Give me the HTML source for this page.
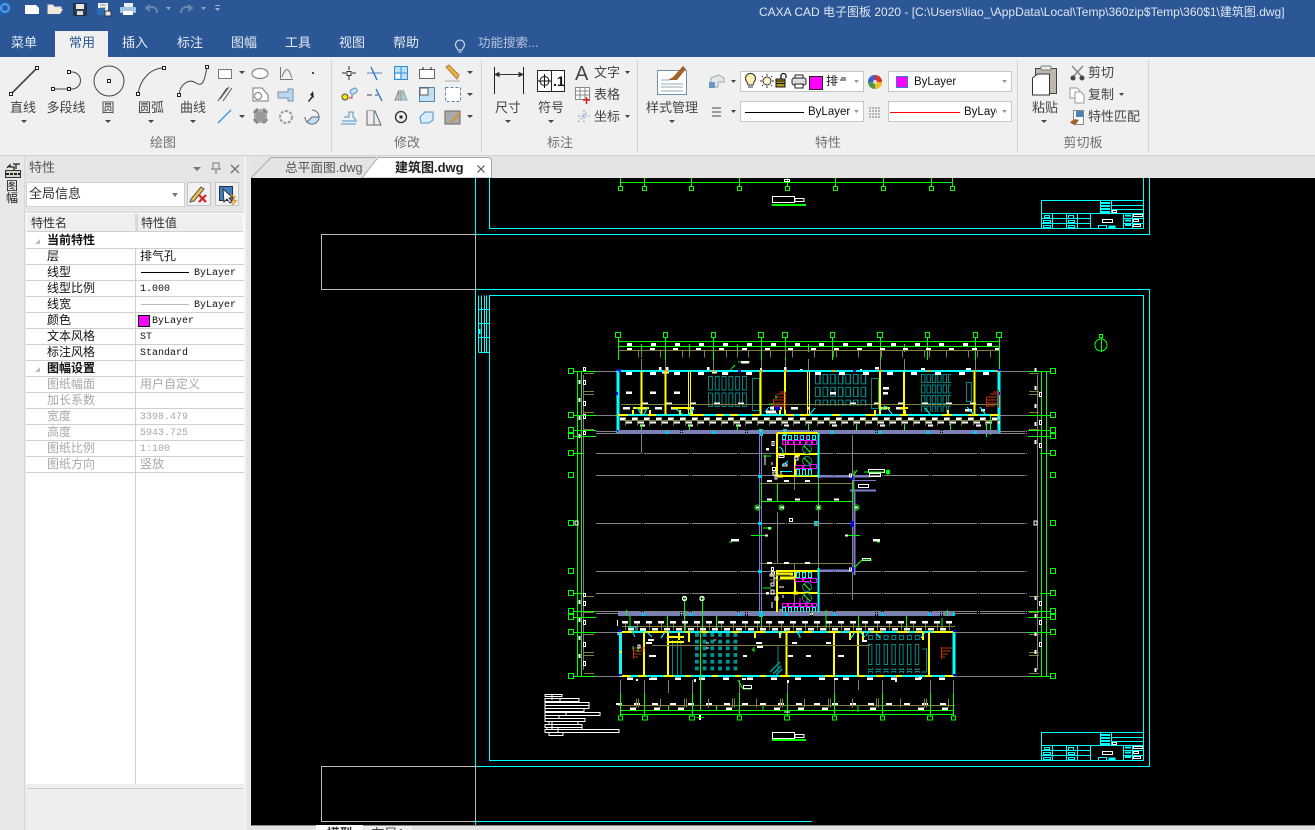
<!DOCTYPE html>
<html lang="zh"><head><meta charset="utf-8"><title>CAXA CAD</title>
<style>
html,body{margin:0;padding:0;width:1315px;height:830px;overflow:hidden;background:#f0f0f0}
body{position:relative;font-family:"Liberation Sans","Noto Sans CJK SC",sans-serif;font-size:13px;color:#444}
.a{position:absolute}
.t{position:absolute;white-space:nowrap;line-height:18px;height:18px}
.c{transform:translateX(-50%)}
.g{color:#707070}
.tab{color:#e6ebf4;font-size:13px}
.combo{position:absolute;background:#fff;border:1px solid #c6c6c6;box-sizing:border-box;height:21px;overflow:hidden}
.combo span{font-size:11.5px}
.r{position:absolute;left:26px;width:218px;height:16px;box-sizing:border-box;border-bottom:1px solid #cfcfcf;font:12px/15px "WenQuanYi Zen Hei","Noto Sans CJK SC",sans-serif;color:#111;overflow:hidden}
.r b{position:absolute;left:21px;top:-1px;font-weight:normal;white-space:nowrap}
.r i{position:absolute;left:114px;top:-1px;font-style:normal;white-space:nowrap}
.r i.m{font:10px/17px "Liberation Mono",monospace;top:0}
.r.d{color:#a8a8a8}
.r.h b{font-weight:bold}
.r s{position:absolute;left:9px;top:6px;width:0;height:0;border-left:5px solid transparent;border-bottom:5px solid #bbb}
svg{position:absolute;display:block}
</style></head><body>

<div class="a" style="left:0;top:0;width:1315px;height:57px;background:#2b5797"></div>
<div class="a" style="left:55px;top:31px;width:53px;height:26px;background:#f0f0f0"></div>
<div class="t tab c" style="left:24px;top:34px">菜单</div>
<div class="t c" style="left:82px;top:34px;color:#2b5797">常用</div>
<div class="t tab c" style="left:135px;top:34px">插入</div>
<div class="t tab c" style="left:190px;top:34px">标注</div>
<div class="t tab c" style="left:244px;top:34px">图幅</div>
<div class="t tab c" style="left:298px;top:34px">工具</div>
<div class="t tab c" style="left:352px;top:34px">视图</div>
<div class="t tab c" style="left:406px;top:34px">帮助</div>
<div class="t" style="left:478px;top:34px;font-size:12.500px;color:#b9c6dc">功能搜索...</div>
<div class="t" style="left:759px;top:3px;font-size:12px;color:#dfe6f1">CAXA CAD 电子图板 2020 - [C:\Users\liao_\AppData\Local\Temp\360zip$Temp\360$1\建筑图.dwg]</div>

<!-- ribbon -->
<div class="a" style="left:0;top:155px;width:1315px;height:23px;background:#e4e4e4;border-top:1px solid #d4d4d4;box-sizing:border-box"></div>

<div class="t c" style="left:23px;top:99px">直线</div>
<div class="t c" style="left:66px;top:99px">多段线</div>
<div class="t c" style="left:108px;top:99px">圆</div>
<div class="t c" style="left:151px;top:99px">圆弧</div>
<div class="t c" style="left:193px;top:99px">曲线</div>
<div class="t c g" style="left:163px;top:134px">绘图</div>
<div class="t c g" style="left:407px;top:134px">修改</div>
<div class="t c g" style="left:560px;top:134px">标注</div>
<div class="t c g" style="left:828px;top:134px">特性</div>
<div class="t c g" style="left:1083px;top:134px">剪切板</div>
<div class="t c" style="left:508px;top:99px">尺寸</div>
<div class="t c" style="left:551px;top:99px">符号</div>
<div class="t" style="left:594px;top:64px">文字</div>
<div class="t" style="left:594px;top:86px">表格</div>
<div class="t" style="left:594px;top:108px">坐标</div>
<div class="t c" style="left:672px;top:99px">样式管理</div>
<div class="t c" style="left:1045px;top:99px">粘贴</div>
<div class="t" style="left:1088px;top:64px">剪切</div>
<div class="t" style="left:1088px;top:86px">复制</div>
<div class="t" style="left:1088px;top:108px">特性匹配</div>

<div class="combo" style="left:740px;top:71px;width:124px"><span class="a" style="left:85px;top:0;font-size:12px;line-height:18px;color:#111;width:13px;overflow:hidden;white-space:nowrap">排气</span></div>
<div class="combo" style="left:888px;top:71px;width:124px"><span class="a" style="left:25px;top:1px;line-height:18px;color:#111">ByLayer</span></div>
<div class="combo" style="left:740px;top:101px;width:124px"><span class="a" style="left:67px;top:1px;line-height:18px;color:#111">ByLayer</span></div>
<div class="combo" style="left:888px;top:101px;width:124px"><span class="a" style="left:75px;top:1px;line-height:18px;color:#111;width:33px;overflow:hidden">ByLayer</span></div>

<svg style="left:0;top:0" width="1315" height="178" viewBox="0 0 1315 178">
 <!-- quick access -->
 <circle cx="4" cy="8" r="7" fill="#1f5fb8"/><circle cx="5" cy="8" r="4" fill="none" stroke="#4aa0e8" stroke-width="2"/><circle cx="5" cy="8" r="1.500" fill="#2b5797"/>
 <path d="M25 5h11l3 3v6H25z" fill="#fff"/>
 <path d="M48 14V5h5l1 2h7v2" fill="#f3efe2" stroke="#ddd"/><path d="M48 14l3-5h12l-3 5z" fill="#efe9d2"/>
 <rect x="73.500" y="3.500" width="13" height="12" rx="1" fill="#263a54" stroke="#1d2a3c"/><rect x="76" y="4" width="8" height="5" fill="#e8e8e8"/><rect x="77" y="11" width="6" height="4" fill="#ddd"/>
 <path d="M98 3h10v9H98z" fill="#f3f3f3"/><path d="M100 5h6M100 8h6" stroke="#889"/><rect x="97" y="8" width="8" height="7" fill="#2f6db5"/><rect x="105" y="11" width="6" height="5" fill="#e8e8e8" stroke="#333"/>
 <rect x="124" y="3" width="9" height="4" fill="#eee"/><rect x="120" y="7" width="16" height="6" rx="1" fill="#9fc5de"/><rect x="123" y="11" width="10" height="4" fill="#fff"/>
 <path d="M157 13c0-6-5-7-9-5M150 5l-4 3 4 3" fill="none" stroke="#6a86b3" stroke-width="2"/>
 <path d="M181 13c0-6 5-7 9-5M188 5l4 3-4 3" fill="none" stroke="#6a86b3" stroke-width="2"/>
 <path d="M166 7h5l-2.500 3zM201 7h5l-2.500 3z" fill="#8fa6c8"/>
 <path d="M215 5h5v1h-5zM215 8h5l-2.500 3z" fill="#9fb2cf"/>
 <!-- search bulb -->
 <path d="M457 48a4.500 4.500 0 1 1 6 0l-1 2h-4zM458.500 52h3" fill="none" stroke="#c7d2e4" stroke-width="1.200"/>

 <!-- separators -->
 <path d="M331.500 60V152M481.500 60V152M637.500 60V152M1017.500 60V152M1148.500 60V152" stroke="#d3d3d3"/>

 <!-- large draw icons -->
 <g fill="none" stroke="#444">
  <path d="M11 94L37 68" stroke-width="1.600"/>
  <path d="M53 89H69M69 72h3a8.500 8.500 0 0 1 0 17h-3"/>
  <circle cx="109" cy="81" r="15"/>
  <path d="M138 94C140 80 150 68 164 68"/>
  <path d="M179 95C180 84 189 78 196 83C204 88 205 77 207 67"/>
 </g>
 <g fill="#fff" stroke="#222"><rect x="9.500" y="92.500" width="3" height="3"/><rect x="35.500" y="66.500" width="3" height="3"/>
  <rect x="51.500" y="87.500" width="3" height="3"/><rect x="67.500" y="87.500" width="3" height="3"/><rect x="67.500" y="70.500" width="3" height="3"/>
  <rect x="107.500" y="79.500" width="3" height="3"/><rect x="136.500" y="92.500" width="3" height="3"/><rect x="162.500" y="66.500" width="3" height="3"/>
  <rect x="177.500" y="93.500" width="3" height="3"/><rect x="205.500" y="65.500" width="3" height="3"/></g>
 <g fill="#444"><path d="M21 120h6l-3 3zM105 120h6l-3 3zM148 120h6l-3 3zM190 120h6l-3 3zM239 71h6l-3 3zM239 115h6l-3 3zM467 71h6l-3 3zM467 93h6l-3 3zM467 115h6l-3 3zM505 120h6l-3 3zM548 120h6l-3 3zM625 71h5l-2.500 3zM625 115h5l-2.500 3zM669 120h6l-3 3zM731 80h5l-2.500 3zM731 110h5l-2.500 3zM1041 120h6l-3 3zM1119 93h5l-2.500 3z"/></g>
 <!-- small draw icons -->
 <g fill="none" stroke="#777">
  <rect x="218.500" y="69.500" width="13" height="9" fill="#fff"/>
  <ellipse cx="260" cy="73.500" rx="8" ry="5" fill="#fff"/>
  <path d="M280.500 67V79.500H293M282 77c3-9 6-9 8-4l2 5"/>
  <path d="M223 101l9-13M220 99l9-12M218 101l9-13" stroke="#555"/>
  <path d="M253 88h9l6 7v6h-15z" fill="#fff"/><circle cx="258" cy="96" r="3.500"/>
  <path d="M255 110h11v12h-11zM253 112h15M253 120h15M257 108v16M264 108v16" stroke="#666"/>
  <path d="M305 117a7 7 0 1 0 7-7" stroke="#666"/>
 </g>
 <path d="M312 72h2v2h-2z" fill="#444"/>
 <path d="M218 123L231 110" stroke="#2f9ae0" stroke-width="1.300" fill="none"/>
 <path d="M278 92h10v-3h5v12h-5v-3h-10z" fill="#bcd8ee" stroke="#7a8fa3"/>
 <path d="M313 91l-3 4 2 1-4 5 1 1 4-5 1 2z" fill="#222"/>
 <path d="M256 112h9v9h-9z" fill="#999"/>
 <circle cx="286" cy="117" r="6" fill="#f4f4f4" stroke="#999" stroke-dasharray="3 1.500" stroke-width="2"/>
 <path d="M312 117h7a7 7 0 0 1-12 5z" fill="#bfe0f5" stroke="#667"/>
 <!-- modify icons -->
 <g fill="none" stroke="#2b2b2b">
  <path d="M342 73h4M352 73h4M349 66v4M349 76v4"/><rect x="347" y="71.500" width="4" height="4" fill="#fff"/>
  <path d="M367 73h15" stroke="#5e88b3"/><path d="M371 67l6 13" stroke="#1f73c4" stroke-width="1.300"/>
  <path d="M367 95h5M375 95h3" stroke="#444"/><path d="M376 89l6 12" stroke="#1f73c4" stroke-width="1.300"/>
  <path d="M401 90v11" stroke="#666"/><path d="M399 90l-4 10h4z" fill="#c8ccd0" stroke="#888"/><path d="M403 90l4 10h-4z" fill="#b9dcf2" stroke="#7aa"/>
  <circle cx="401" cy="117" r="5.500" stroke-width="1.300"/><path d="M400 116h2v2h-2z" fill="#222"/>
 </g>
 <g stroke="#2f8fd6" fill="#bfe0f5"><rect x="394.500" y="66.500" width="13" height="13"/><path d="M401 66v13M394 73h13" fill="none"/><rect x="396" y="74" width="4" height="4" fill="#fff" stroke="none"/></g>
 <g fill="none" stroke="#666"><rect x="419.500" y="69.500" width="15" height="9" fill="#fff"/><path d="M423 67v3M431 67v3" stroke="#2b2b2b"/>
  <rect x="445.500" y="87.500" width="15" height="14" fill="#fff" stroke-dasharray="3 2" stroke="#58a"/>
  <path d="M367 111h8l6 14h-14z" fill="#e5f0f8"/><path d="M367 111v14h7V111" fill="#eee"/>
  <path d="M445 111h15v13h-15z" fill="#aaa"/></g>
 <path d="M419.500 87.500h15v14h-15z" fill="#bfe0f5" stroke="#58a"/><path d="M420 88h8v7h-8z" fill="#fff" stroke="#555"/>
 <path d="M446 67l3-2 10 10-2 4z" fill="#f2b330" stroke="#a75"/><path d="M445 81h15" stroke="#aaa"/>
 <circle cx="345" cy="97" r="3" fill="#ffe600" stroke="#444"/><rect x="350" y="89" width="7" height="5" rx="2" fill="#bfe0f5" stroke="#5a8fc0" transform="rotate(-30 353 91)"/><path d="M349 98h3v-3" fill="none" stroke="#b33"/>
 <path d="M342 121h15M344 117h5v-5h4v5l3 3M341 124h15" fill="none" stroke="#4b93cb"/>
 <path d="M420 117l5-5h8v8l-4 3h-8z" fill="#d8edf9" stroke="#4b93cb"/>
 <path d="M452 122l8-9" stroke="#d99020" stroke-width="2"/>
 <!-- annotate -->
 <path d="M494.500 67V94M523.500 67V94" stroke="#222"/><path d="M495 74.500H523M495 74.500l4-2v4zM523 74.500l-4-2v4z" stroke="#333" fill="#333"/>
 <rect x="537.500" y="70.500" width="27" height="21" fill="#fff" stroke="#222"/><path d="M551.500 70v21" stroke="#222"/><circle cx="544.500" cy="81" r="4.500" fill="none" stroke="#111"/><path d="M538 81h13M544.500 74v14" stroke="#111"/>
 <text x="553" y="86" font-family="Liberation Sans" font-weight="bold" font-size="14" fill="#111">.1</text>
 <text x="575" y="80" font-family="Liberation Sans" font-size="20" fill="#444">A</text>
 <g fill="#fff" stroke="#888"><rect x="575.500" y="87.500" width="14" height="12"/><path d="M575 91h15M575 95h15M580 87v13M585 87v13" fill="none"/></g><path d="M583 100h7M586.500 97v7" stroke="#d22" stroke-width="1.500"/>
 <path d="M578 116h12M584 110v14M578 122l9-10" stroke="#7fa3c4" stroke-dasharray="2 1.500" fill="none"/>
 <!-- style mgmt -->
 <rect x="657.500" y="70.500" width="29" height="24" fill="#fff" stroke="#6f8fab"/><path d="M661 80h9M661 84h22M661 87h22M661 91h22" stroke="#96a9ba"/><path d="M668 80l5-3 10-11 3 3-9 11z" fill="#a0642a"/>
 <!-- props -->
 <path d="M711 78l8-3 5 3v4h-6v5h-7z" fill="#e3e8ef" stroke="#9aa"/><rect x="709" y="82" width="6" height="6" fill="#6f93c4"/>
 <path d="M747 82a5 5 0 1 1 7 0l-1 3h-5zM748 87h5" fill="#fbeeb0" stroke="#333"/>
 <circle cx="767" cy="81" r="4" fill="#fdf3d0" stroke="#333"/><path d="M767 74v2M767 86v2M760 81h2M772 81h2M762 76l1 1M772 76l-1 1M762 86l1-1M772 86l-1-1" stroke="#333"/>
 <rect x="776" y="79" width="9" height="8" fill="#b39b1a" stroke="#111"/><path d="M776 81h9M776 83.500h9" stroke="#111"/><path d="M781 79v-3a2.500 2.500 0 0 1 5 0v2" fill="none" stroke="#111" stroke-width="1.300"/>
 <rect x="792" y="78" width="14" height="7" rx="2" fill="#ddd" stroke="#222"/><rect x="795" y="75" width="8" height="3" fill="#fff" stroke="#222"/><rect x="795" y="84" width="8" height="4" fill="#fff" stroke="#222"/>
 <rect x="809.500" y="76.500" width="13" height="13" fill="#f0f" stroke="#222"/>
 <path d="M841 78h5M840 80h6" stroke="#222"/>
 <path d="M854 80h5l-2.500 3zM1002 80h5l-2.500 3zM854 110h5l-2.500 3zM1002 110h5l-2.500 3z" fill="#999"/>
 <circle cx="875" cy="82" r="7" fill="#4a9a4a"/><path d="M875 75a7 7 0 0 1 7 7h-7z" fill="#e03030"/><path d="M868 82a7 7 0 0 1 7-7v7z" fill="#4060d0"/><path d="M875 82h7a7 7 0 0 1-7 7z" fill="#f0c020"/><circle cx="875" cy="82" r="2" fill="#ddd"/>
 <rect x="896.500" y="76.500" width="11" height="11" fill="#f0f" stroke="#3a7fc0"/>
 <path d="M712 108h9M712 112h9M712 116h9" stroke="#444"/>
 <path d="M745 112.500h59" stroke="#000"/>
 <path d="M869 108h12M869 111h12M869 114h12M869 117h12" stroke="#777" stroke-dasharray="2 1"/>
 <path d="M890 112.500h70" stroke="#f00"/>
 <!-- clipboard -->
 <rect x="1035.500" y="68.500" width="21" height="25" fill="#bfb8ae" stroke="#444"/><rect x="1041" y="66" width="10" height="4" rx="1" fill="#eee" stroke="#777"/>
 <path d="M1032.500 78l5-4h12v21h-17z" fill="#fff" stroke="#333"/>
 <path d="M1072 66l11 12M1083 66l-11 12" stroke="#888" stroke-width="1.500"/><circle cx="1073" cy="78" r="2.500" fill="#444"/><circle cx="1082" cy="78" r="2.500" fill="#444"/>
 <path d="M1070 88h7l3 3v7h-10z" fill="#fff" stroke="#999"/><path d="M1075 92h6l3 3v8h-9z" fill="#fff" stroke="#999"/>
 <rect x="1073.500" y="110.500" width="10" height="14" fill="#fff" stroke="#888"/><rect x="1076" y="111" width="7" height="6" fill="#4a80b8"/><path d="M1070 122l5-3 4 1-3 4h-4z" fill="#a0602a"/>

 <!-- doc tabs -->
 <path d="M362 178L378 157.500H488q3.500 0 3.500 3.500V178z" fill="#fff" stroke="#a8a8a8"/>
 <path d="M251 178L271 157.500H376" fill="none" stroke="#a8a8a8"/>
 <path d="M477.500 165.500l7 7M484.500 165.500l-7 7" stroke="#555" stroke-width="1.200"/>
</svg>

<div class="t" style="left:285px;top:159px;font-size:12.700px;color:#555">总平面图.dwg</div>
<div class="t" style="left:395px;top:159px;font-size:13px;font-weight:bold;color:#222">建筑图.dwg</div>

<!-- left panel -->
<div class="a" style="left:0;top:156px;width:251px;height:674px;background:#e6e6e6"></div>
<div class="a" style="left:0;top:156px;width:25px;height:674px;background:#e8e8e8;border-right:1px solid #d8d8d8;box-sizing:border-box"></div>
<div class="a" style="left:244px;top:156px;width:2px;height:674px;background:#f4f4f4"></div>
<div class="t" style="left:29px;top:159px;color:#555;font-size:13px">特性</div>
<div class="a" style="left:5px;top:180px;font-size:12px;line-height:12px;width:14px;text-align:center;color:#222">图<br>幅</div>
<div class="a" style="left:26px;top:182px;width:159px;height:25px;background:#fff;border:1px solid #d0d0d0;box-sizing:border-box"></div>
<div class="t" style="left:29px;top:185px;font-size:13px;color:#333">全局信息</div>
<div class="a" style="left:187px;top:182px;width:24px;height:24px;background:#f2f2f2;border:1px solid #c4c4c4;box-sizing:border-box"></div>
<div class="a" style="left:215px;top:182px;width:24px;height:24px;background:#f2f2f2;border:1px solid #c4c4c4;box-sizing:border-box"></div>
<div class="a" style="left:26px;top:212px;width:218px;height:572px;background:#fff;border-top:1px solid #d8d8d8;box-sizing:border-box"></div>
<div class="a" style="left:27px;top:214px;width:216px;height:18px;background:#efefef;border-bottom:1px solid #cfcfcf;box-sizing:border-box"></div>
<div class="a" style="left:135px;top:214px;width:3px;height:18px;background:#d8d8d8"></div>
<div class="t" style="left:31px;top:214px;font-size:12px;color:#333">特性名</div>
<div class="t" style="left:141px;top:214px;font-size:12px;color:#333">特性值</div>

<div class="r h" style="top:233px"><s></s><b>当前特性</b></div>
<div class="r" style="top:249px"><b>层</b><i>排气孔</i></div>
<div class="r" style="top:265px"><b>线型</b><i class="m" style="left:168px">ByLayer</i></div>
<div class="r" style="top:281px"><b>线型比例</b><i class="m">1.000</i></div>
<div class="r" style="top:297px"><b>线宽</b><i class="m" style="left:168px">ByLayer</i></div>
<div class="r" style="top:313px"><b>颜色</b><i class="m" style="left:126px">ByLayer</i></div>
<div class="r" style="top:329px"><b>文本风格</b><i class="m">ST</i></div>
<div class="r" style="top:345px"><b>标注风格</b><i class="m">Standard</i></div>
<div class="r h" style="top:361px"><s></s><b>图幅设置</b></div>
<div class="r d" style="top:377px"><b>图纸幅面</b><i>用户自定义</i></div>
<div class="r d" style="top:393px"><b>加长系数</b></div>
<div class="r d" style="top:409px"><b>宽度</b><i class="m">3398.479</i></div>
<div class="r d" style="top:425px"><b>高度</b><i class="m">5943.725</i></div>
<div class="r d" style="top:441px"><b>图纸比例</b><i class="m">1:100</i></div>
<div class="r d" style="top:457px"><b>图纸方向</b><i>竖放</i></div>
<div class="a" style="left:135px;top:249px;width:1px;height:535px;background:#cfcfcf"></div>
<div class="a" style="left:26px;top:784px;width:218px;height:46px;background:#eee"></div>
<div class="a" style="left:27px;top:788px;width:216px;height:1px;background:#c8c8c8"></div>

<svg style="left:0;top:150px" width="251" height="180" viewBox="0 150 251 180">
 <!-- sidebar icon -->
 <path d="M5.500 177.500V170.500h15v7z" fill="#d8d4c4" stroke="#333"/><path d="M7 168l3-3v2h4v3M13 164h7M16 164v5" fill="none" stroke="#222" stroke-width="1.300"/><path d="M6 174h14" stroke="#222" stroke-width="2" stroke-dasharray="3 1"/>
 <!-- panel header buttons -->
 <path d="M193 167h8l-4 4z" fill="#777"/>
 <path d="M213 163h6v6h-6zM216 169v5M211 169h10" fill="none" stroke="#777"/>
 <path d="M231 165l8 8M239 165l-8 8" stroke="#777" stroke-width="1.500"/>
 <path d="M141 272.500h48" stroke="#000"/><path d="M141 304.500h48" stroke="#bbb"/>
 <rect x="138.500" y="315.500" width="11" height="11" fill="#f0f" stroke="#000"/>
 <path d="M172 193h6l-3 4z" fill="#777"/>
 <path d="M191 199l10-12 3 2-10 12-4 1z" fill="#f3c04a" stroke="#555"/><path d="M199 195l7 7M206 195l-7 7" stroke="#d22" stroke-width="2.200"/>
 <rect x="219.500" y="186.500" width="13" height="14" fill="#3f7fc0" stroke="#234"/><path d="M223 189l1 13 3-3 3 4 2-1-3-4h4z" fill="#fff" stroke="#333"/><path d="M231 195l4 2-2 3 3 1-4 4" fill="none" stroke="#e8962a" stroke-width="1.500"/>
</svg>

<!-- canvas -->
<div class="a" style="left:251px;top:178px;width:1064px;height:647px;background:#000"></div>
<svg style="left:251px;top:178px" width="1064" height="647" viewBox="251 178 1064 647" shape-rendering="crispEdges" fill="none">
 <defs>
  <pattern id="p1" x="708" y="376" width="6.800" height="16.500" patternUnits="userSpaceOnUse"><rect x=".5" y=".5" width="4" height="13.500" fill="none" stroke="#008b8b"/></pattern>
  <pattern id="p2" x="815" y="374" width="7.600" height="12.800" patternUnits="userSpaceOnUse"><rect x=".5" y=".5" width="4.500" height="9.500" fill="none" stroke="#008b8b"/></pattern>
  <pattern id="p3" x="921" y="374" width="5.400" height="10.500" patternUnits="userSpaceOnUse"><rect x=".5" y=".5" width="3.200" height="8" fill="none" stroke="#008b8b"/></pattern>
  <pattern id="p4" x="695" y="633" width="7.700" height="6.700" patternUnits="userSpaceOnUse"><rect x="0" y="0" width="4" height="4" fill="#009393"/></pattern>
  <pattern id="p5" x="868" y="644" width="7.800" height="22" patternUnits="userSpaceOnUse"><rect x=".5" y=".5" width="3.500" height="20" fill="none" stroke="#008b8b"/></pattern>
  <pattern id="p6" x="868" y="635" width="7.800" height="6" patternUnits="userSpaceOnUse"><rect x=".5" y=".5" width="4" height="4" fill="none" stroke="#008b8b"/></pattern>
  <g id="tb" stroke="#0ff">
   <path d="M1041.500 228V200.500H1143.500M1041.500 213.500H1143.500M1100.500 200V213M1111.500 200V213M1111 205.500H1143M1111 209.500H1143M1052.500 213V228M1066.500 213V228M1077.500 213V228M1090.500 213V228M1123.500 213V228M1132.500 213V228M1041 218.500H1090M1041 223.500H1090M1123 218.500H1143M1123 223.500H1143"/>
   <path d="M1101 203h9M1101 206h9M1101 209h9M1101 212h9" stroke-width="2"/>
   <rect x="1044.500" y="215.500" width="5" height="2"/><rect x="1043.500" y="220.500" width="7" height="2"/><rect x="1043.500" y="225.500" width="7" height="2"/>
   <rect x="1068.500" y="215.500" width="5" height="3"/><rect x="1068.500" y="220.500" width="6" height="2"/><rect x="1068.500" y="225.500" width="6" height="2"/>
   <rect x="1098.500" y="225.500" width="8" height="3"/><rect x="1109" y="226" width="6" height="2" fill="#0ff"/>
   <path d="M1125 215.500h6M1125 220.500h6M1125 225h6" stroke-width="2"/>
   <g stroke="#fff"><rect x="1102.500" y="219.500" width="10" height="3"/><rect x="1133.500" y="214.500" width="9" height="2"/><rect x="1133.500" y="219.500" width="5" height="2"/><rect x="1133.500" y="224.500" width="7" height="2"/><rect x="1112.500" y="210.500" width="4" height="2"/></g>
  </g>
 </defs>

 <!-- frames -->
 <path stroke="#0ff" d="M475.500 178V234M489.500 178V228.500H1143.500V178M475.500 234.500H1149.500V178M475.500 289.500H1149.500V766.500H475.500M475.500 289.500V766M489.500 295.500H1143.500V760.500H489.500ZM475.500 821.500H812M475.500 822V825"/>
 <path stroke="#bbb" d="M321.500 234.500H475.500V289.500H321.500ZM321.500 766.500H475.500V821.500H321.500Z"/>
 <use href="#tb"/><use href="#tb" y="532"/>
 <path stroke="#0ff" d="M478.500 295.500V352M481.500 295.500V352M484.500 295.500V352M486.500 295.500V352M489.500 296V352M478 309.500H489M478 323.500H489M478 337.500H489M478.500 352.500H489"/>
 <path stroke="#0ff" d="M479.500 329v5" stroke-width="2"/>

 <!-- north -->
 <g stroke="#0f0"><circle cx="1101" cy="345" r="6"/><path d="M1101.500 338V352"/><rect x="1099.500" y="334.500" width="3" height="3"/></g>

 <!-- top remnant -->
 <path stroke="#0f0" d="M620 182.500H953M620.500 178V186M644.500 178V186M691.500 178V186M739.500 178V186M787.500 178V186M835.500 178V186M883.500 178V186M931.500 178V186M952.500 178V186"/>
 <path stroke="#0f0" stroke-width="1.300" d="M618.500 186.500h4v4h-4zM642.500 186.500h4v4h-4zM689.500 186.500h4v4h-4zM737.500 186.500h4v4h-4zM785.500 186.500h4v4h-4zM833.500 186.500h4v4h-4zM881.500 186.500h4v4h-4zM929.500 186.500h4v4h-4zM950.500 186.500h4v4h-4z"/>
 <path stroke="#fff" d="M772.500 196.500h22v6h-22zM795 198.500h9v3h-9zM784.500 179.500h5v2h-5z"/>
 <path stroke="#0f0" stroke-width="2" d="M772 205H806"/>

 <!-- gray grid lines -->
 <path stroke="#848484" stroke-dasharray="45 1 1 1" d="M596 453.500H1028M596 475.500H1028M596 523.500H1028M596 571.500H1028M596 593.500H1028M596 431.500H1028M596 433.500H1028M596 611.500H1028M596 613.500H1028"/>
 <path stroke="#808080" d="M596 371.500H618M999 371.500H1028M596 415.500H618M999 415.500H1028M596 632.500H620M954 632.500H1028M596 676.500H620M954 676.500H1028M852.500 435V600M777.500 512V563M818.500 477V571M641.500 359V371M665.500 359V371M713.500 359V371M761.500 359V371M785.500 359V371M808.500 359V371M880.500 359V371M904.500 359V371M975.500 359V371M641.500 433V453M785.500 433V453M620.500 680V700M644.500 680V700M668.500 680V693M692.500 680V700M739.500 680V700M787.500 680V700M834.500 680V700M858.500 680V690M882.500 680V700M930.500 680V700M953.500 680V700M583.500 375V670M1037.500 375V670"/>

 <!-- axis green -->
 <path stroke="#0f0" d="M577.500 371V676M581.500 371V676M1041.500 371V676M1046.500 371V676M573 371.500H596M573 415.500H596M573 430.500H596M573 436.500H596M573 453.500H584M573 593.500H584M573 611.500H596M573 617.500H596M573 632.500H596M573 676.500H596M1028 371.500H1051M1028 415.500H1051M1028 430.500H1051M1028 436.500H1051M1040 453.500H1051M1040 593.500H1051M1028 611.500H1051M1028 617.500H1051M1028 632.500H1051M1028 676.500H1051"/>
 <path stroke="#0f0" stroke-width="1.300" d="M568.500 368.500h5v5h-5zM568.500 412.500h5v5h-5zM568.500 427.500h5v5h-5zM568.500 433.500h5v5h-5zM568.500 450.500h5v5h-5zM568.500 472.500h5v5h-5zM568.500 520.500h5v5h-5zM568.500 568.500h5v5h-5zM568.500 590.500h5v5h-5zM568.500 608.500h5v5h-5zM568.500 614.500h5v5h-5zM568.500 629.500h5v5h-5zM568.500 673.500h5v5h-5zM1050.500 368.500h5v5h-5zM1050.500 412.500h5v5h-5zM1050.500 427.500h5v5h-5zM1050.500 433.500h5v5h-5zM1050.500 450.500h5v5h-5zM1050.500 472.500h5v5h-5zM1050.500 520.500h5v5h-5zM1050.500 568.500h5v5h-5zM1050.500 590.500h5v5h-5zM1050.500 608.500h5v5h-5zM1050.500 614.500h5v5h-5zM1050.500 629.500h5v5h-5zM1050.500 673.500h5v5h-5z"/>
 <!-- axis details -->
 <path stroke="#808040" d="M584 373.500H594M584 391.500H594M584 394.500H594M584 412.500H594M584 429.500H594M584 596.500H594M584 612.500H594M584 634.500H594M584 652.500H594M584 655.500H594M584 673.500H594M1029 373.500H1039M1029 391.500H1039M1029 394.500H1039M1029 412.500H1039M1029 429.500H1039M1029 596.500H1039M1029 612.500H1039M1029 634.500H1039M1029 652.500H1039M1029 655.500H1039M1029 673.500H1039"/>
 <path stroke="#fff" d="M583.500 367.500h2v3h-2zM583.500 380.500h2v4h-2zM583.500 401.500h2v4h-2zM583.500 414.500h2v4h-2zM583.500 431.500h2v3h-2zM583.500 593.500h2v3h-2zM583.500 601.500h2v4h-2zM583.500 620.500h2v4h-2zM583.500 642.500h2v4h-2zM583.500 661.500h2v4h-2zM1039.500 392.500h2v4h-2zM1039.500 420.500h2v4h-2zM1039.500 443.500h2v4h-2zM1039.500 601.500h2v4h-2zM1039.500 620.500h2v4h-2zM1039.500 642.500h2v4h-2zM575 521h3v4h-3zM1034 521h3v4h-3z"/>
 <path stroke="#fff" stroke-width="2" stroke-dasharray="4 14" d="M579.500 380V445M579.500 600V670M1035.500 368V445M1035.500 596V672"/>

 <!-- TOP WING upper rows -->
 <path stroke="#0f0" d="M618 341.500H999M618 346.500H999M618.500 338V360M665.500 338V360M713.500 338V360M761.500 338V360M785.500 338V360M832.500 338V360M880.500 338V360M927.500 338V360M975.500 338V360M999.500 338V371M641.500 344V352M689.500 344V352M737.500 344V352M808.500 344V352M904.500 344V352"/>
 <path stroke="#0f0" stroke-width="1.300" d="M615.500 332.500h5v5h-5zM663.500 332.500h4v5h-4zM711.500 332.500h4v5h-4zM758.500 332.500h5v5h-5zM782.500 332.500h5v5h-5zM830.500 332.500h4v5h-4zM877.500 332.500h5v5h-5zM925.500 332.500h4v5h-4zM973.500 332.500h4v5h-4zM996.500 332.500h5v5h-5z"/>
 <path stroke="#808040" d="M618 350.500H999"/>
 <path stroke="#808040" stroke-width="7" stroke-dasharray="1 21" d="M638 354H999"/>
 <path stroke="#808040" stroke-width="7" stroke-dasharray="1 47" d="M641 354H999"/>
 <path stroke="#fff" stroke-width="3" stroke-dasharray="5 19" d="M627 344.500H999"/>
 <path stroke="#fff" stroke-width="2" stroke-dasharray="5 18" d="M627 349H999"/>
 <!-- top wing room furniture -->
 <rect x="708" y="376" width="40" height="32" fill="url(#p1)"/>
 <rect x="752.500" y="378.500" width="7" height="32" stroke="#008b8b"/>
 <rect x="815" y="374" width="53" height="32" fill="url(#p2)"/>
 <rect x="871.500" y="378.500" width="7" height="30" stroke="#008b8b"/>
 <rect x="921" y="374" width="30" height="38" fill="url(#p3)"/>
 <rect x="966.500" y="382.500" width="5" height="19" stroke="#008b8b"/>
 <!-- white rows inside -->
 <path stroke="#fff" stroke-width="3" stroke-dasharray="6 18" d="M626 373.500H760M815 373.500H990"/>
 <path stroke="#fff" stroke-width="2.500" stroke-dasharray="6 18" d="M626 392.500H690M642 403.500H760M850 403.500H990M830 393H840M883 388H890M883 393H888"/>
 <path stroke="#fff" stroke-width="2.500" stroke-dasharray="7 9" d="M623 408H700M775 408H810M880 408H910M965 410H985"/>
 <path stroke="#808040" d="M621 404.500H999"/>
 <path stroke="#0f0" d="M735 365L728 372.500M738 362H750"/>
 <path stroke="#fff" stroke-width="2.500" d="M741 362H749"/>
 <path stroke="#fff" stroke-width="2.500" d="M660 367v3M662 372h7M667 367v4M708 367v3M712 372h5M760 369h2M785 367v3M801 369v2M860 370h2M875 368h4M921 369h4M966 369h5"/>
 <!-- walls -->
 <path stroke="#0ff" stroke-width="2" d="M618 371H999M618 415H999"/>
 <path stroke="#0ff" stroke-width="3" d="M618 370V433M999 371V433"/>
 <path stroke="#ff0" stroke-width="2" d="M641.500 371V415M665.500 371V415M760.500 371V415M785 371V415M880 371V415M904 371V415M974.500 371V415"/>
 <path stroke="#ff0" d="M688.500 371V415M690.500 371V415M807.500 371V415M809.500 371V415"/>
 <path stroke="#ff0" stroke-width="2" d="M618 415h10M648 415h8M690 415h14M716 415h8M730 415h8M752 415h8M786 415h8M800 415h10M832 415h8M866 415h10M900 415h8M942 415h10M968 415h10M990 415h9M633 410V415M650 410V415M680 410V415M692 410V415M780 410V415M875 410V415M905 410V415M948 410V415"/>
 <path stroke="#ff0" stroke-width="1.600" d="M633 408h16M672 408h20M778 408h4M880 408h10M900 408h8"/>
 <path stroke="#fa0" stroke-width="2" d="M664 371h4M712 371h3M760 371h3M784 371h3M832 371h3M879 371h3M927 371h3M974 371h3M996 371h3"/>
 <path stroke="#00f" stroke-width="2" d="M617 370h3v3M617 431h3M998 370h3M738 371h3M853 371h3M999 392v3M617 392v3"/>
 <!-- doors -->
 <path stroke="#0ff" d="M637 407l4 7M648 407l-4 7M676 409l7 6M694 409l-6 6M765 412l4-5M771 408l6 6M815 408l-5 6M880 411l5-5M886 406l6 8M925 408l5 6M967 407l7 8M980 407l6 8"/>
 <!-- red stairs -->
 <path stroke="#c8300a" d="M773.500 400h12M773.500 403h12M773.500 406h12M775 397h10M777 394h8M780 392h5M785.500 392V410M773.500 399V409M986 400h12M987 397h11M987 403h11M987 406h8M990 394h8M993 392h5M998.500 390V408M986.500 397V407" stroke-width="1.400"/>
 <path stroke="#0f0" d="M769 404h4M776 395v4"/>
 <path stroke="#00f" stroke-width="3" d="M775 408h5"/>
 <path stroke="#fff" stroke-width="3" d="M766 412h10M770 408h4"/>
 <!-- below wing wall rows -->
 <path stroke="#fff" stroke-width="2.500" stroke-dasharray="6 6" d="M620 418.500H1000"/>
 <path stroke="#fff" stroke-width="1.800" stroke-dasharray="6 6" d="M626 422.500H1000"/>
 <path stroke="#808040" d="M620 420.500H1000"/>
 <path stroke="#808040" stroke-width="7" stroke-dasharray="1 11" d="M625 422H998"/>
 <path stroke="#fff" stroke-width="2" stroke-dasharray="5 43" d="M640 425.500H990"/>
 <path stroke="#0f0" d="M641.500 424V433M689.500 424V433M737.500 424V433M808.500 424V433M856.500 424V433M904.500 424V433M950.500 424V433M986.500 424V437M990.500 416V435"/>
 <!-- blue band -->
 <path stroke="#7a80b4" stroke-width="4" stroke-dasharray="62 1 1 1" d="M618 432H999"/>
 <path fill="#00c8f0" d="M665 431h4v3h-4zM712 431h4v3h-4zM759 429h4v7h-4zM783 429h4v7h-4zM830 431h4v3h-4zM878 431h4v3h-4zM926 431h4v3h-4zM973 431h4v3h-4z"/>
 <path stroke="#fa0" d="M760.500 430v2M784.500 430v2"/>

 <!-- central corridor -->
 <path stroke="#7a80d0" d="M759.500 433V615M761.500 433V615"/>
 <path stroke="#7a80d0" stroke-width="2" d="M818 476.500H870M818 570.500H852M853.500 475V492M854.500 492V575M850 490.500H876"/>
 <path stroke="#7a80d0" d="M853 480.500H876"/>
 <path fill="#00c8f0" d="M758 475h4v3h-4zM758 522h4v3h-4zM758 570h4v3h-4zM814 521h5v5h-5z"/>
 <path fill="#b8860b" d="M815 523h3v2h-3z"/>
 <path fill="#00f" d="M851 475h3v5h-3zM851 521h3v6h-3zM851 567h3v5h-3z"/>
 <path stroke="#808040" d="M760 483.500H853M760 563.500H853M794.500 433V490M794.500 563V613M854 470V490"/>
 <path stroke="#0f0" d="M761.500 483V501M777.500 483V501M818.500 483V501M852.500 483V501M761 501.500H852"/>
 <path stroke="#fff" stroke-width="2" d="M767 481h5M784 481h5M805 481h5M767 499.500h5M795 499.500h5M834 499.500h5M767 563h5M784 563h5M805 563h5"/>
 <g stroke="#0f0"><circle cx="757.500" cy="507.500" r="2.500"/><circle cx="781.500" cy="507.500" r="2.500"/><circle cx="818.500" cy="507.500" r="2.500"/><circle cx="856.500" cy="507.500" r="2.500"/></g>
 <path stroke="#fff" stroke-width="2" d="M756 507.500h3M780 507.500h4M817 507.500h3M855 507.500h3"/>
 <path stroke="#fff" d="M789.500 518.500h3v3h-3zM868.500 469.500h16v3h-16zM869.500 473.500h11v3h-11zM858.500 484.500h10v3h-10zM862.500 558.500h8v2h-8zM765 455v10M773 472h3v3h-3zM849.500 474h2v3h-2zM772.500 467.500h3v3h-3zM771.500 572h3v3h-3zM849.500 568h2v3h-2zM774 575v10"/>
 <path stroke="#fff" stroke-width="2.500" d="M731 540h8M873 540h7M768 528h3M766 449h3M766 593h3"/>
 <path stroke="#0f0" d="M751 535.500H766M846 535.500H860M729 542h3M880 542h-3M857 470l-4 6M862 560l-8 8M864 472h20M862 560h10M763 528H772M763 456H771M763 588H771"/>
 <path stroke="#fff" stroke-width="2" d="M765 535.500h3M845 535.500h3"/>
 <path stroke="#0f0" stroke-width="4" d="M886 472h4"/>
 <path stroke="#0f0" d="M888 469V475"/>

 <!-- upper tower -->
 <path stroke="#ff0" stroke-width="2" d="M777 433V476M777 433H818M777 454H818M777 476H818M795 460V476"/>
 <path stroke="#ff0" stroke-width="3" d="M795 455h5M778 476h5"/>
 <path stroke="#0ff" stroke-width="2" d="M818.500 433V478"/>
 <path stroke="#0ff" d="M782.500 435.500h3v4h-3zM788.500 435.500h3v4h-3zM794.500 435.500h3v4h-3zM800.500 435.500h3v4h-3zM806.500 435.500h3v4h-3zM812.500 435.500h3v4h-3zM796.500 469.500h3v6h-3zM802.500 469.500h3v6h-3zM808.500 469.500h3v6h-3zM780 471.500h6M786 471.500h6"/>
 <path stroke="#f0f" d="M782.500 440.500h5v4h-5zM788.500 440.500h5v4h-5zM794.500 440.500h5v4h-5zM800.500 440.500h5v4h-5zM806.500 440.500h5v4h-5zM812.500 440.500h4v4h-4zM795.500 465.500h7v3h-7zM803.500 465.500h7v3h-7zM810.500 464.500h6v4h-6zM800 435V445M807 435V445"/>
 <g stroke="#008b8b"><circle cx="807" cy="449" r="4.500"/><circle cx="807" cy="461" r="4.500"/></g>
 <path stroke="#0f0" d="M804 446l6 6M804 458l6 6"/>
 <path stroke="#fff" d="M772 441.500h2v4h-2zM779 455.500h5v2h-5zM783 464h4v2h-4zM772 462v3M775 476h2v3h-2zM781 471v3M795 457h3v3h-3z"/>
 <path stroke="#0ff" d="M779 447a6 6 0 0 1 4 7M782 466l6-5"/>

 <!-- lower tower -->
 <path stroke="#ff0" stroke-width="2" d="M777 570V614M777 571H818M777 593H818M777 614H818M795 571V592"/>
 <path stroke="#ff0" stroke-width="3" d="M780 578H795M793 593h5M778 574h15"/>
 <path stroke="#0ff" stroke-width="2" d="M818.500 568V616"/>
 <path stroke="#0ff" d="M796.500 572.500h3v5h-3zM802.500 572.500h3v5h-3zM808.500 572.500h3v5h-3zM782.500 607.500h3v5h-3zM788.500 607.500h3v5h-3zM794.500 607.500h3v5h-3zM800.500 607.500h3v5h-3zM806.500 607.500h3v5h-3zM812.500 607.500h3v5h-3z"/>
 <path stroke="#f0f" d="M795.500 578.500h7v3h-7zM803.500 578.500h7v3h-7zM810.500 578.500h6v4h-6zM782.500 603.500h5v3h-5zM788.500 603.500h5v3h-5zM794.500 603.500h5v3h-5zM800.500 603.500h5v3h-5zM806.500 603.500h5v3h-5zM812.500 603.500h4v3h-4zM800 598V608M807 598V608"/>
 <g stroke="#008b8b"><circle cx="807" cy="587" r="4.500"/><circle cx="807" cy="598" r="4.500"/></g>
 <path stroke="#0f0" d="M804 584l6 6M804 595l6 6"/>
 <path stroke="#fff" d="M771.500 567.500h2v3h-2zM770 574h4v2h-4zM771 583h3v3h-3zM771 590h3v4h-3zM774 578h4M779 587h5M783 595v3M772 602v6M775 597h3v3h-3zM779 610h3"/>
 <path stroke="#808040" d="M770 575H790M770 580H780"/>

 <!-- BOTTOM WING top rows -->
 <path stroke="#7a80b4" stroke-width="4" stroke-dasharray="62 1 1 1" d="M618 614H955"/>
 <path fill="#00c8f0" d="M642 613h3v3h-3zM690 613h3v3h-3zM738 613h3v3h-3zM759 611h4v6h-4zM785 613h3v3h-3zM833 613h3v3h-3zM881 613h3v3h-3zM928 613h3v3h-3zM952 613h3v3h-3z"/>
 <g stroke="#0f0"><path d="M684.500 597V631M702.500 597V632M626.500 610V616M630 616V632M667.500 616V632M716.500 616V632M761.500 615V632M826 610V632M858.500 616V632M906.500 616V632M947.500 610V616M942 618V632M684 597.500h3"/></g>
 <g stroke="#fff" stroke-width="1.300"><circle cx="684.500" cy="598.500" r="2"/><circle cx="702" cy="598.500" r="2"/></g>
 <path stroke="#fff" stroke-width="2.500" stroke-dasharray="6 6" d="M622 622H955"/>
 <path stroke="#fff" stroke-width="2.500" stroke-dasharray="6 6" d="M628 629H950"/>
 <path stroke="#808040" d="M622 626.500H955"/>
 <path stroke="#808040" stroke-width="7" stroke-dasharray="1 11" d="M625 627H950"/>
 <path stroke="#fff" d="M617.500 620v6M618 632.500h3v2h-3zM714 640h2M858 632h3"/>
 <!-- bottom wing furniture -->
 <rect x="695" y="633" width="46" height="40" fill="url(#p4)"/>
 <path stroke="#008b8b" d="M672.500 640V675M677.500 640V675M681 640V675"/>
 <rect x="868" y="644" width="54" height="22" fill="url(#p5)"/>
 <rect x="868" y="635" width="54" height="6" fill="url(#p6)"/>
 <rect x="868" y="668" width="54" height="5" fill="url(#p6)"/>
 <path stroke="#008b8b" d="M922.500 649h4V672h-5"/>
 <path stroke="#008b8b" stroke-width="2" d="M770 672l10-10M773 674l8-8M776 675l6-6"/>
 <path stroke="#008b8b" d="M778 645V672"/>
 <!-- walls -->
 <path stroke="#0ff" stroke-width="2" d="M620 632H954M620 676H954"/>
 <path stroke="#0ff" stroke-width="3" d="M620.500 632V677M954 632V677"/>
 <path stroke="#ff0" stroke-width="2" d="M644 632V676M668 632V676M786.500 632V676M834 632V676M858 632V676M929 632V676"/>
 <path stroke="#ff0" stroke-width="2" d="M620 632h12M644 632h24M668 637h16M668 642h16M685 632h4V642M700 632h8M732 632h8M755 632h10M780 632h18M804 632h8M828 632h12M850 632h12M870 632h12M897 632h12M915 632h8M933 632h21M620 676h10M638 676h8M664 676h10M685 676h6M712 676h6M735 676h6M760 676h6M780 676h10M825 676h10M857 676h8M876 676h8M896 676h6M925 676h7M945 676h9M679 632V640M755 632V638M780 632V638M850 632V640M863 632V640M923 632V640M620 652h2"/>
 <path stroke="#0ff" d="M628 627h8v4M632 631l3 6M640 631h6M647 632l5 5M665 632l-4 6M780 637a6 6 0 0 1 6-6M794 632a6 6 0 0 1 6 6M855 632l-4 6M860 632l5 5M866 636a6 6 0 0 1 6-4M875 632l5 6M925 632l-4 6"/>
 <path stroke="#00f" stroke-width="2" d="M619 631h3M619 675h3M953 631h3M953 675h3"/>
 <!-- red stairs -->
 <path stroke="#c8300a" stroke-width="1.400" d="M633 648H645M633 651H644M633 654H641M633 657H638M633.500 647V659M941 648H952M941 651H951M941 654H948M941 657H945M941.500 647V659"/>
 <path stroke="#0f0" d="M638 645V652M633 646V650M752 649l2 2M754 647v5"/>
 <path stroke="#fff" d="M638 645h2v3h-2zM706 643h3M706 648h3"/>
 <!-- interior white -->
 <path stroke="#fff" stroke-width="2" d="M649 656h7M743 656h4M788 656h5M806 656h5M838 656h6M646 643h6M648 640h6M756 643h6M757 647h6M792 643h5M826 643h5M862 641h5"/>
 <path stroke="#808040" d="M652 645.500H800M800 645.500H870"/>
 <!-- below wing -->
 <path stroke="#fff" stroke-width="2.500" stroke-dasharray="6 18" d="M627 678.500H955"/>
 <path stroke="#fff" stroke-width="2" d="M695 679v3M649 679h2M637 679v2M742 679h4M834 679h4M896 679v3M788 680v3M919 678h3"/>
 <path stroke="#0f0" d="M700.500 632V710M738 680l5 9M743 689h8"/>
 <path stroke="#fff" d="M743.500 685.500h8v3h-8z"/>
 <path stroke="#fff" stroke-width="2" stroke-dasharray="6 12" d="M616 704H953"/>
 <path stroke="#808040" d="M618 705.500H955"/>
 <path stroke="#808040" stroke-width="9" stroke-dasharray="1 23" d="M636 703H950"/>
 <path stroke="#808040" stroke-width="9" stroke-dasharray="1 47" d="M638 703H950"/>
 <path stroke="#fff" stroke-width="2.500" stroke-dasharray="6 42" d="M630 708.500H953"/>
 <path stroke="#fff" stroke-width="2.500" stroke-dasharray="6 66" d="M654 708.500H953"/>
 <path stroke="#0f0" d="M620 710.500H953M620 714.500H953M620.500 693V716M644.500 693V716M692.500 693V716M739.500 693V716M787.500 693V716M834.500 693V716M882.500 693V716M930.500 693V716M953.500 693V716M668.500 706V710M716.500 706V710M763 706V710M858 706V712"/>
 <path stroke="#0f0" stroke-width="1.300" d="M618.500 716h4v4h-4zM642.500 716h5v4h-5zM689.500 716h5v4h-5zM737.500 716h4v4h-4zM784.500 716h5v4h-5zM832.500 716h4v4h-4zM880.500 716h4v4h-4zM927.500 716h5v4h-5zM951.500 716h4v4h-4z"/>
 <path stroke="#fff" stroke-width="2" d="M700 715v5"/>
 <path stroke="#0f0" d="M697 717.500h7"/>
 <path stroke="#fff" d="M772.500 732.500h22v6h-22zM795 734.500h9v3h-9zM784 712h6"/>
 <path stroke="#0f0" stroke-width="2" d="M772 740H806"/>

 <!-- legend -->
 <path stroke="#fff" d="M545 694.500h17v2h-17zM545 698.500h34v3h-34zM545 702.500h44v3h-44zM545 705.500h44v3h-44zM545 708.500h39v3h-39zM545 712.500h55v3h-55zM545 715.500h14v3h-14zM545 718.500h40v3h-40zM549 721.500h29v3h-29zM545 724.500h37v3h-37zM547 727.500h35v2h-35zM545 729.500h74v3h-74zM549 732.500h14v3h-14zM552 695V700M560 698V702M566 712V716M552 722V730M558 727V733"/>
</svg>

<!-- bottom strip -->
<div class="a" style="left:251px;top:825px;width:1064px;height:5px;background:#e3e3e3;border-top:1px solid #8a8a8a;box-sizing:border-box"></div>
<div class="a" style="left:316px;top:825px;width:47px;height:5px;background:#fff;overflow:hidden;text-align:center;font-size:13px;line-height:18px;font-weight:bold;color:#333">模型</div>
<div class="a" style="left:364px;top:826px;width:48px;height:4px;background:#eee;overflow:hidden;text-align:center;font-size:13px;line-height:16px;color:#444">布局1</div>
</body></html>
